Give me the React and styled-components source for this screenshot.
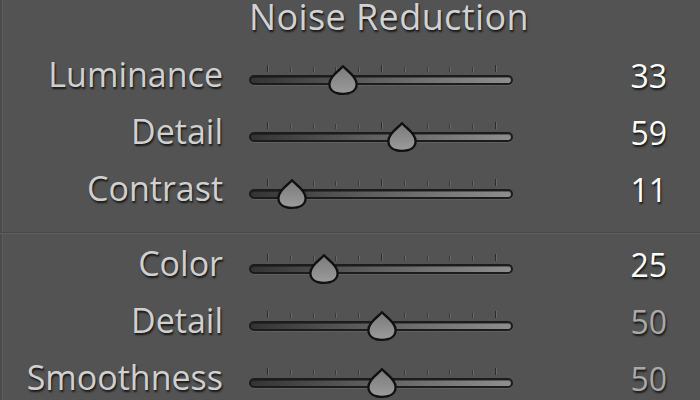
import React from "react";
import styled, { createGlobalStyle } from "styled-components";

const Global = createGlobalStyle`
  html, body { margin: 0; padding: 0; background: #535353; }
  body { font-family: "Open Sans", "DejaVu Sans", sans-serif; }
`;

const Panel = styled.div`
  width: 700px;
  height: 400px;
  overflow: hidden;
  background: #535353;
  box-shadow: inset 2px 0 0 #4b4b4b, inset 3px 0 0 #5d5d5d;
`;

const Grid = styled.div`
  display: grid;
  grid-template-columns: 223px 264px 1fr;
  column-gap: 26px;
`;

const Header = styled(Grid)`
  height: 51px;
  padding-top: 1px;
  box-sizing: border-box;
`;

const Title = styled.h2`
  grid-column: 2 / 4;
  margin: 0;
  font-size: 36px;
  line-height: 32px;
  letter-spacing: 0.4px;
  font-weight: 400;
  color: #d2d2d2;
  white-space: nowrap;
  text-shadow: 1px 2px 2px rgba(0, 0, 0, 0.75);
`;

const Row = styled(Grid)`
  height: 57px;
  align-items: center;
`;

const Label = styled.div`
  justify-self: end;
  font-size: 34px;
  line-height: 34px;
  padding-bottom: 12px;
  color: #d0d0d0;
  white-space: nowrap;
  text-shadow: 1px 2px 2px rgba(0, 0, 0, 0.75);
`;

const Value = styled.div`
  justify-self: end;
  padding-right: 33px;
  padding-bottom: 8px;
  font-size: 32px;
  line-height: 32px;
  color: ${(p) => (p.$dim ? "#a9a9a9" : "#ffffff")};
  text-shadow: 1px 2px 2px rgba(0, 0, 0, 0.75);
`;

const Divider = styled.div`
  margin: 10px 0 6px;
  height: 1px;
  background: #484848;
  border-bottom: 1px solid #5f5f5f;
`;

const SliderWrap = styled.div`
  position: relative;
  height: 30px;
  padding-bottom: 10px;
  box-sizing: border-box;
  display: flex;
  flex-direction: column;
`;

const Ticks = styled.div`
  display: flex;
  justify-content: space-between;
  align-items: flex-end;
  height: 7px;
  padding: 0 17px 0 18px;
  margin-bottom: 3px;
`;

const Tick = styled.span`
  width: 1px;
  height: ${(p) => (p.$major ? "7px" : "5px")};
  background: ${(p) => (p.$major ? "#2c2c2c" : "#3a3a3a")};
  box-shadow: 1px 0 0 #686868;
`;

const Track = styled.div`
  height: 6px;
  border: 2px solid #1c1c1c;
  border-radius: 6px;
  background: linear-gradient(90deg, #343434 0%, #5e5e5e 45%, #8e8e8e 100%);
  box-shadow: inset 0 1px 0 rgba(0, 0, 0, 0.35), 0 1px 0 rgba(255, 255, 255, 0.08);
`;

const ThumbSvg = styled.svg`
  position: absolute;
  top: 0;
  width: 30px;
  height: 30px;
  overflow: visible;
`;

function Thumb({ left }) {
  return (
    <ThumbSvg viewBox="0 0 30 30" style={{ left }}>
      <defs>
        <linearGradient id="tg" x1="0" y1="0" x2="0" y2="1">
          <stop offset="0" stopColor="#7a7a7a" />
          <stop offset="0.6" stopColor="#8e8e8e" />
          <stop offset="1" stopColor="#9c9c9c" />
        </linearGradient>
      </defs>
      <path
        d="M15 1.2 C17.5 5, 28.6 10.5, 28.6 19 C28.6 25.8, 22.5 28.8, 15 28.8 C7.5 28.8, 1.4 25.8, 1.4 19 C1.4 10.5, 12.5 5, 15 1.2 Z"
        fill="url(#tg)"
        stroke="#111"
        strokeWidth="2.3"
        strokeLinejoin="round"
      />
    </ThumbSvg>
  );
}

function Slider({ value }) {
  const x = 18 + (value / 100) * 229 - 15;
  return (
    <SliderWrap>
      <Ticks>
        {Array.from({ length: 11 }, (_, i) => (
          <Tick key={i} $major={i === 0 || i === 5 || i === 10} />
        ))}
      </Ticks>
      <Track />
      <Thumb left={x} />
    </SliderWrap>
  );
}

const luminance = [
  { label: "Luminance", value: 33 },
  { label: "Detail", value: 59 },
  { label: "Contrast", value: 11 },
];

const color = [
  { label: "Color", value: 25 },
  { label: "Detail", value: 50, dim: true },
  { label: "Smoothness", value: 50, dim: true },
];

function SliderRow({ label, value, dim }) {
  return (
    <Row>
      <Label>{label}</Label>
      <Slider value={value} />
      <Value $dim={dim}>{value}</Value>
    </Row>
  );
}

export default function App() {
  return (
    <Panel>
      <Global />
      <Header>
        <Title>Noise Reduction</Title>
      </Header>
      {luminance.map((r) => (
        <SliderRow key={"l" + r.label} {...r} />
      ))}
      <Divider />
      {color.map((r) => (
        <SliderRow key={"c" + r.label} {...r} />
      ))}
    </Panel>
  );
}
